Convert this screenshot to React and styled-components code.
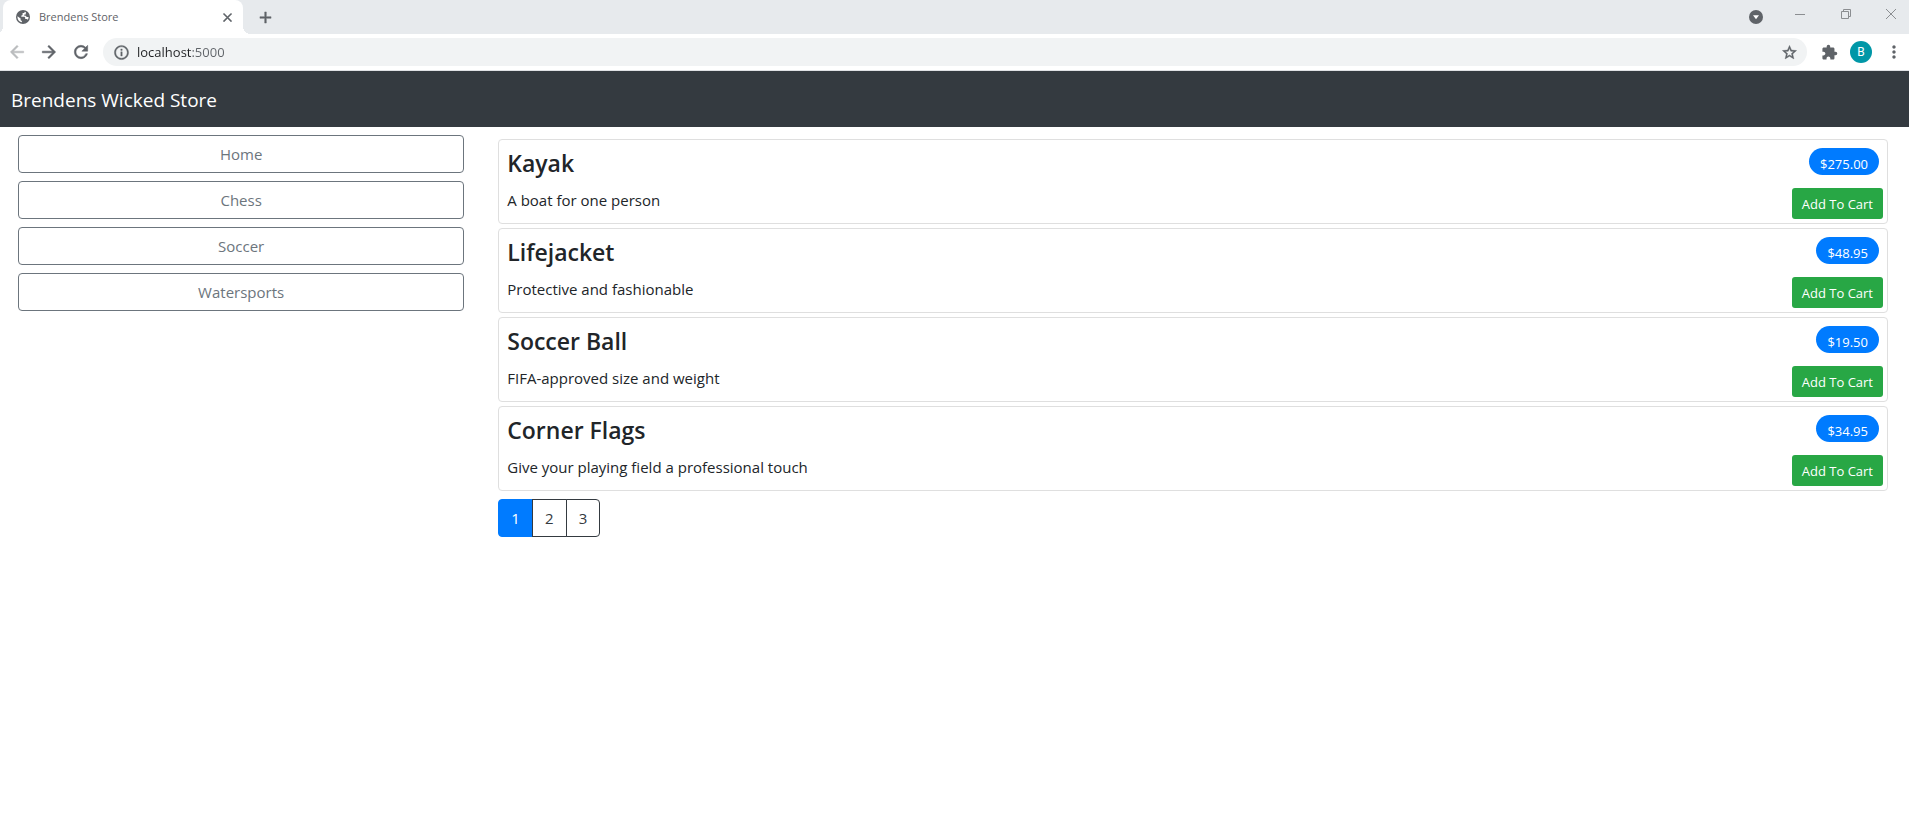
import React from "react";
import styled, { createGlobalStyle, css } from "styled-components";
import {
  MdAdd,
  MdArrowBack,
  MdArrowForward,
  MdClose,
  MdExtension,
  MdInfoOutline,
  MdMoreVert,
  MdRefresh,
  MdStarBorder,
} from "react-icons/md";

const GlobalStyle = createGlobalStyle`
  *, *::before, *::after { box-sizing: border-box; }
  body {
    margin: 0;
    background: #fff;
    color: #212529;
    font-family: "Open Sans", "Noto Sans", sans-serif;
    font-size: 15px;
    line-height: 24px;
  }
  button, input { font: inherit; margin: 0; }
  svg { display: block; flex: none; }
  svg path[fill="none"] { stroke: none; }
`;

/* ---------- browser frame ---------- */

const TabStrip = styled.div`
  display: flex;
  align-items: center;
  height: 34px;
  padding-left: 3px;
  background: #e7eaed;
`;

const Tab = styled.div`
  position: relative;
  display: flex;
  align-items: center;
  gap: 8px;
  width: 240px;
  height: 34px;
  padding: 0 8px 0 12px;
  border-radius: 8px 8px 0 0;
  background: #fff;
  color: #5f6368;

  &::before,
  &::after {
    content: "";
    position: absolute;
    bottom: 0;
    width: 8px;
    height: 8px;
  }
  &::before {
    right: 100%;
    background: radial-gradient(circle at 0 0, transparent 8px, #fff 8px);
  }
  &::after {
    left: 100%;
    background: radial-gradient(circle at 100% 0, transparent 8px, #fff 8px);
  }
`;

const TabTitle = styled.span`
  flex: 1;
  font-size: 11px;
  line-height: 16px;
`;

const IconButton = styled.button`
  display: flex;
  align-items: center;
  justify-content: center;
  flex: none;
  width: ${(p) => p.$width || 32}px;
  height: 28px;
  padding: 0;
  border: 0;
  background: none;
  color: ${(p) => p.$color || "#5f6368"};

  svg {
    stroke-width: ${(p) => (p.$bold ? 0.6 : 0)};
  }
`;

const CaptionButton = styled(IconButton)`
  color: #8b8e91;

  svg {
    stroke-width: 1;
  }
`;

const WindowControls = styled.div`
  display: flex;
  align-items: center;
  margin-left: auto;
`;

const CaptionButtons = styled.div`
  display: flex;
  height: 34px;
  padding-left: 9px;
`;

const Toolbar = styled.div`
  display: flex;
  align-items: center;
  height: 37px;
  padding-left: 1px;
  border-bottom: 1px solid #dfe1e4;
  background: #fff;
`;

const AddressBar = styled.div`
  display: flex;
  align-items: center;
  flex: 1;
  height: 28px;
  margin: 0 8px 0 6px;
  padding: 0 2px 0 10px;
  gap: 7px;
  border-radius: 14px;
  background: #f1f3f4;
  color: #5f6368;
`;

const InfoIcon = styled(MdInfoOutline)`
  stroke-width: 0.5;
`;

const AddressInput = styled.input`
  flex: 1;
  min-width: 0;
  height: 20px;
  padding: 0;
  border: 0;
  outline: 0;
  background: linear-gradient(90deg, #202124 54px, #5f6368 54px);
  background-clip: text;
  -webkit-background-clip: text;
  color: transparent;
  font-size: 13px;
  line-height: 20px;
`;

const Avatar = styled.span`
  display: flex;
  align-items: center;
  justify-content: center;
  width: 22px;
  height: 22px;
  border-radius: 50%;
  background: #0097a7;
  color: #fff;
  font-family: Roboto, sans-serif;
  font-size: 12px;
  line-height: 16px;
`;

/* ---------- store ---------- */

const Navbar = styled.header`
  padding: 17px 11px 15px;
  background: #343a40;
  color: #fff;
  font-size: 19px;
  line-height: 24px;
`;

const Columns = styled.div`
  display: grid;
  grid-template-columns: 1fr 3fr;
`;

const Sidebar = styled.nav`
  display: flex;
  flex-direction: column;
  gap: 8px;
  padding: 8px 13px 8px 18px;
`;

const buttonBase = css`
  padding: 6px 12px;
  border: 1px solid;
  background: #fff;
  line-height: 24px;
`;

const CategoryButton = styled.button`
  ${buttonBase}
  border-color: #6c757d;
  border-radius: 4px;
  color: #6c757d;
`;

const Main = styled.main`
  padding: 12px 21px;
`;

const ProductList = styled.div`
  display: flex;
  flex-direction: column;
  gap: 4px;
`;

const Card = styled.article`
  display: flex;
  justify-content: space-between;
  padding: 8px 4px 4px 8px;
  border: 1px solid #dfdfdf;
  border-radius: 4px;
`;

const ProductName = styled.h4`
  margin: 0 0 10px;
  font-size: 23px;
  font-weight: 600;
  line-height: 30px;
`;

const Description = styled.p`
  margin: 0;
`;

const Purchase = styled.div`
  display: flex;
  flex-direction: column;
  align-items: flex-end;
  gap: 13px;
`;

const Price = styled.span`
  margin-right: 4px;
  padding: 6px 11px 1px;
  border-radius: 14px;
  background: #007bff;
  color: #fff;
  font-size: 13px;
  line-height: 20px;
`;

const CartButton = styled.button`
  padding: 6px 10px 5px;
  border: 0;
  border-radius: 3px;
  background: #28a745;
  color: #fff;
  font-size: 13px;
  line-height: 20px;
`;

const Pagination = styled.nav`
  display: flex;
  width: 102px;
  margin-top: 8px;
`;

const PageButton = styled.button`
  ${buttonBase}
  flex: 1;
  margin-left: -1px;
  border-color: ${(p) => (p.$active ? "#007bff" : "#343a40")};
  background: ${(p) => (p.$active ? "#007bff" : "#fff")};
  color: ${(p) => (p.$active ? "#fff" : "#343a40")};

  &:first-child {
    margin-left: 0;
    border-radius: 4px 0 0 4px;
  }
  &:last-child {
    border-radius: 0 4px 4px 0;
  }
`;

const categories = ["Home", "Chess", "Soccer", "Watersports"];

const products = [
  { name: "Kayak", text: "A boat for one person", price: "$275.00" },
  { name: "Lifejacket", text: "Protective and fashionable", price: "$48.95" },
  { name: "Soccer Ball", text: "FIFA-approved size and weight", price: "$19.50" },
  { name: "Corner Flags", text: "Give your playing field a professional touch", price: "$34.95" },
];

function GlobeIcon() {
  return (
    <svg width="16" height="16" viewBox="0 0 16 16">
      <circle cx="8" cy="8" r="7" fill="#5f6368" />
      <path
        d="M9.800 2.700C9.600 3.900 8.700 4.100 7.600 4.100v1.400c0 .7-.6 1-1.300 1v1.300h2.600c1 0 1.300.6 1.300 1.300v1h1.600l1 .6c.5-.8.8-1.700.8-2.700h-1.500c-.8 0-1.200-.5-1.200-1.200H9.300V5.400h1.400l.2-2.100zM2.500 7.200c-.3 2.900 1.500 5.500 4.400 6.100v-1.600c-.9 0-1.300-.5-1.300-1.300v-.8z"
        fill="#fff"
      />
    </svg>
  );
}

function BrowserFrame() {
  return (
    <div>
      <TabStrip>
        <Tab>
          <GlobeIcon />
          <TabTitle>Brendens Store</TabTitle>
          <IconButton $width={16} $bold aria-label="Close tab">
            <MdClose size={15} />
          </IconButton>
        </Tab>
        <IconButton $width={44} $bold aria-label="New tab">
          <MdAdd size={19} />
        </IconButton>
        <WindowControls>
          <IconButton aria-label="Search tabs">
            <svg width="14" height="14" viewBox="0 0 14 14">
              <circle cx="7" cy="7" r="7" fill="#5f6368" />
              <path d="M4 5.200h6L7 9.200z" fill="#fff" />
            </svg>
          </IconButton>
          <CaptionButtons>
            <CaptionButton $width={38} aria-label="Minimize">
              <svg width="10" height="10" viewBox="0 0 10 10" stroke="currentColor">
                <path d="M0 5.500h10" />
              </svg>
            </CaptionButton>
            <CaptionButton $width={54} aria-label="Restore">
              <svg width="10" height="10" viewBox="0 0 10 10" fill="none" stroke="currentColor">
                <path d="M.5 2.500h7v7h-7zM2.500 2.500v-2h7v7h-2" />
              </svg>
            </CaptionButton>
            <CaptionButton $width={36} aria-label="Close">
              <svg width="10" height="10" viewBox="0 0 10 10" stroke="currentColor">
                <path d="M0 0l10 10M10 0L0 10" />
              </svg>
            </CaptionButton>
          </CaptionButtons>
        </WindowControls>
      </TabStrip>
      <Toolbar>
        <IconButton $bold aria-label="Back" $color="#babcbe">
          <MdArrowBack size={20} />
        </IconButton>
        <IconButton $bold aria-label="Forward">
          <MdArrowForward size={20} />
        </IconButton>
        <IconButton $bold aria-label="Reload">
          <MdRefresh size={20} />
        </IconButton>
        <AddressBar>
          <InfoIcon size={17} />
          <AddressInput aria-label="Address" defaultValue="localhost:5000" />
          <IconButton $bold aria-label="Bookmark this page">
            <MdStarBorder size={17} />
          </IconButton>
        </AddressBar>
        <IconButton $width={28} aria-label="Extensions">
          <MdExtension size={17} />
        </IconButton>
        <IconButton $width={36} aria-label="Profile">
          <Avatar>B</Avatar>
        </IconButton>
        <IconButton $width={30} aria-label="Menu">
          <MdMoreVert size={20} />
        </IconButton>
      </Toolbar>
    </div>
  );
}

export default function App() {
  return (
    <>
      <GlobalStyle />
      <BrowserFrame />
      <Navbar>Brendens Wicked Store</Navbar>
      <Columns>
        <Sidebar aria-label="Categories">
          {categories.map((name) => (
            <CategoryButton key={name}>{name}</CategoryButton>
          ))}
        </Sidebar>
        <Main>
          <ProductList>
            {products.map((product) => (
              <Card key={product.name}>
                <div>
                  <ProductName>{product.name}</ProductName>
                  <Description>{product.text}</Description>
                </div>
                <Purchase>
                  <Price>{product.price}</Price>
                  <CartButton>Add To Cart</CartButton>
                </Purchase>
              </Card>
            ))}
          </ProductList>
          <Pagination aria-label="Pages">
            {[1, 2, 3].map((page) => (
              <PageButton key={page} $active={page === 1}>
                {page}
              </PageButton>
            ))}
          </Pagination>
        </Main>
      </Columns>
    </>
  );
}
